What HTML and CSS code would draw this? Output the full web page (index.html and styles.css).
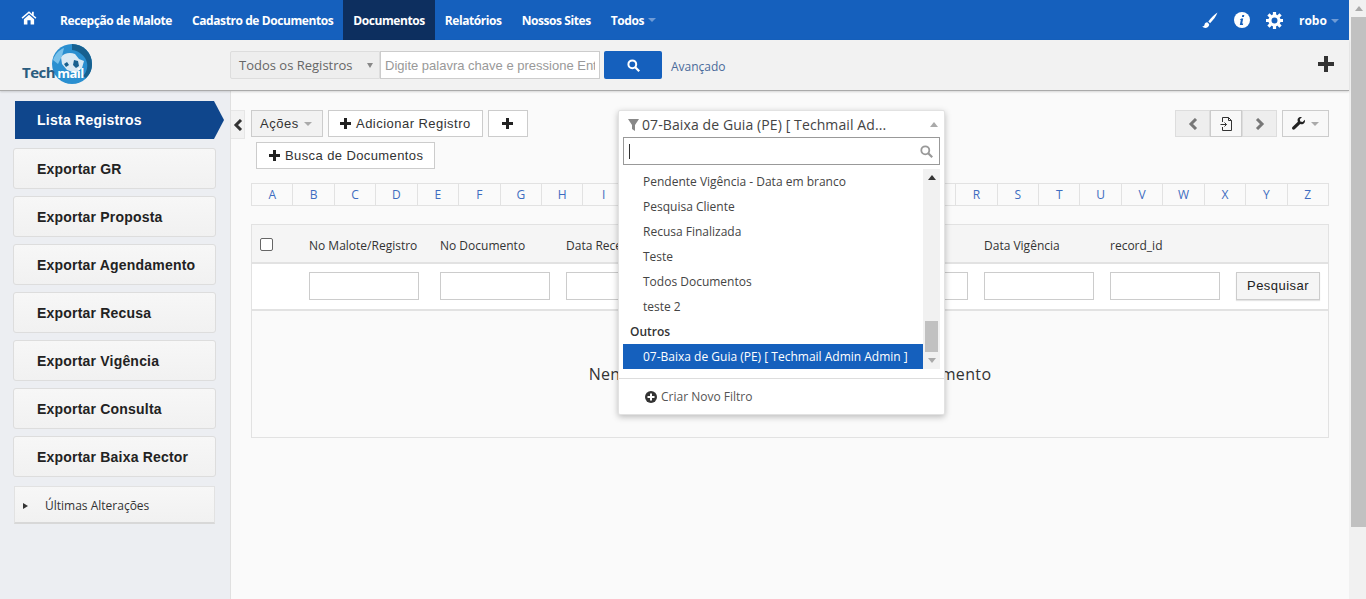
FILE: index.html
```html
<!DOCTYPE html>
<html lang="pt-BR">
<head>
    <meta charset="UTF-8">
    <meta name="viewport" content="width=device-width, initial-scale=1.0">
    <title>Documentos</title>
    <link rel="stylesheet" href="styles.css">
</head>
<body>
<div class="page">
    <header class="topbar">
        <a class="home-link">
            <svg width="16" height="15" viewBox="0 0 18 17"><path fill="#fff" d="M9 1.500.6 8.600l1.100 1.300L9 3.800l7.300 6.100 1.100-1.300-3-2.500V2h-2v2.400zM3.200 10.400v6.100h4v-5h3.600v5h4v-6.100L9 5.500z"/></svg>
        </a>
        <a class="nav-item">Recepção de Malote</a>
        <a class="nav-item">Cadastro de Documentos</a>
        <a class="nav-item active">Documentos</a>
        <a class="nav-item">Relatórios</a>
        <a class="nav-item">Nossos Sites</a>
        <a class="nav-item">Todos <span class="caret caret-nav"></span></a>
        <div class="nav-right">
            <svg width="17" height="17" viewBox="0 0 17 17"><path fill="#fff" d="M16.500.6C13.500 2.300 9.500 6.300 7.300 9.500l1.800 1.700C12 8.700 15.300 4 16.500.6zM6.300 10.300c-1.700.1-2.600 1.100-2.800 2.400-.1 1-.8 1.700-2.300 1.800 1.300 1.500 3.700 1.900 5.400.8 1.200-.8 1.800-2 1.500-3.200z"/></svg>
            <svg width="16" height="16" viewBox="0 0 16 16"><circle cx="8" cy="8" r="8" fill="#fff"/><path fill="#1560bd" d="M8.300 3h2l-.4 2h-2zM7.200 6.500h2l-1 5h1l-.3 1.500H5.800l1-5h-1z"/></svg>
            <svg width="17" height="17" viewBox="0 0 16 16"><circle cx="8" cy="8" r="4.300" fill="none" stroke="#fff" stroke-width="3"/><path stroke="#fff" stroke-width="3" d="M8 0v3M8 13v3M0 8h3M13 8h3M2.300 2.300l2.100 2.100M11.600 11.600l2.100 2.100M2.300 13.700l2.100-2.100M11.600 4.400l2.100-2.100"/></svg>
            <span class="user-name">robo <span class="caret caret-nav"></span></span>
        </div>
    </header>

    <div class="subheader">
        <div class="logo">
            <svg width="44" height="44" viewBox="0 0 44 44">
                <circle cx="22" cy="22" r="20" fill="#2a8fd0"/>
                <path fill="#17608f" d="M22 2a20 20 0 0 1 20 20c0 6-2 10-6 14l-3-2c3-3 5-8 4-13-1-6-7-12-15-13z"/>
                <path fill="#d9e9f3" d="M11 15c3-4 9-5 14-3l4 5 5 2-2 7-6 5-9-3-5-6z"/>
                <path fill="#17608f" d="M24 18l4 1 1 5-3 2-3-3zM14 22l3-2 2 3-3 2z"/>
                <path fill="#79c1ea" d="M3 18c2-6 6-10 11-12l-2 8-4 8z"/>
            </svg>
            <span class="logo-text"><span class="logo-tech">Tech</span><span class="logo-mail">mail</span></span>
        </div>
        <div class="search-select">Todos os Registros <span class="caret caret-gray"></span></div>
        <input class="search-input" type="text" placeholder="Digite palavra chave e pressione Enter">
        <button class="search-btn">
            <svg width="13" height="13" viewBox="0 0 13 13"><circle cx="5.300" cy="5.300" r="3.900" fill="none" stroke="#fff" stroke-width="2"/><path stroke="#fff" stroke-width="2.200" d="m8.200 8.200 4 4"/></svg>
        </button>
        <a class="advanced-link">Avançado</a>
        <svg class="add-big" width="18" height="18" viewBox="0 0 18 18"><path fill="#333" d="M7 1h4v6h6v4h-6v6H7v-6H1V7h6z"/></svg>
    </div>

    <div class="layout">
        <aside class="sidebar">
            <a class="side-active">Lista Registros</a>
            <a class="side-btn">Exportar GR</a>
            <a class="side-btn">Exportar Proposta</a>
            <a class="side-btn">Exportar Agendamento</a>
            <a class="side-btn">Exportar Recusa</a>
            <a class="side-btn">Exportar Vigência</a>
            <a class="side-btn">Exportar Consulta</a>
            <a class="side-btn">Exportar Baixa Rector</a>
            <div class="side-recent"><span class="tri-right"></span>Últimas Alterações</div>
        </aside>

        <main class="content">
            <div class="collapse-tab">
                <svg width="10" height="12" viewBox="0 0 10 12"><path fill="none" stroke="#333" stroke-width="3" d="M8 1 3 6l5 5"/></svg>
            </div>
            <div class="toolbar">
                <div class="tool-left">
                    <button class="btn btn-gray">Ações <span class="caret caret-gray"></span></button>
                    <button class="btn btn-add"><span class="plus"></span>Adicionar Registro</button>
                    <button class="btn btn-plus"><span class="plus"></span></button>
                    <button class="btn btn-search"><span class="plus"></span>Busca de Documentos</button>
                </div>
                <div class="tool-right">
                    <div class="pager">
                        <button class="pager-btn pager-off">
                            <svg width="10" height="12" viewBox="0 0 10 12"><path fill="none" stroke="#777" stroke-width="3" d="M8 1 3 6l5 5"/></svg>
                        </button>
                        <button class="pager-btn pager-mid">
                            <svg width="13" height="14" viewBox="0 0 13 14"><path fill="none" stroke="#333" d="M2.500 5V.5h6l3 3v10h-9V10M8.500.5v3h3M.5 7.500h6M4.500 5.500l2 2-2 2"/></svg>
                        </button>
                        <button class="pager-btn pager-off">
                            <svg width="10" height="12" viewBox="0 0 10 12"><path fill="none" stroke="#777" stroke-width="3" d="m2 1 5 5-5 5"/></svg>
                        </button>
                    </div>
                    <button class="btn btn-tools">
                        <svg width="13" height="13" viewBox="0 0 13 13"><path fill="#222" d="M12.800 2.800 10.600 5 8.300 4.500 7.800 2.200 10 0C8.300-.5 6.400.2 5.800 1.800c-.4 1-.3 2 .1 2.900L.5 10.100c-.6.600-.6 1.600 0 2.200s1.600.6 2.200 0l5.500-5.400c.9.400 1.900.4 2.800.1 1.600-.7 2.300-2.500 1.800-4.200z"/></svg>
                        <span class="caret caret-gray"></span>
                    </button>
                </div>
            </div>

            <div class="alphabet">
                <a>A</a><a>B</a><a>C</a><a>D</a><a>E</a><a>F</a><a>G</a><a>H</a><a>I</a><a>J</a><a>K</a><a>L</a><a>M</a>
                <a>N</a><a>O</a><a>P</a><a>Q</a><a>R</a><a>S</a><a>T</a><a>U</a><a>V</a><a>W</a><a>X</a><a>Y</a><a>Z</a>
            </div>

            <div class="grid-box">
                <div class="grid-row grid-head">
                    <span class="check"></span>
                    <span>No Malote/Registro</span>
                    <span>No Documento</span>
                    <span>Data Recebimento</span>
                    <span>Data Baixa</span>
                    <span>Situação</span>
                    <span>Data Vigência</span>
                    <span>record_id</span>
                    <span></span>
                </div>
                <div class="grid-row grid-filter">
                    <span></span>
                    <input type="text">
                    <input type="text">
                    <input type="text">
                    <input type="text">
                    <input type="text">
                    <input type="text">
                    <input type="text">
                    <button class="btn-find">Pesquisar</button>
                </div>
                <div class="grid-empty">Nenhum Registro encontrado para este Documento</div>
            </div>

            <div class="filter-drop">
                <div class="filter-head">
                    <svg class="funnel" width="11" height="12" viewBox="0 0 11 12"><path fill="#888" d="M0 0h11L7 6v6L4 10V6z"/></svg>
                    <span class="filter-title">07-Baixa de Guia (PE) [ Techmail Ad...</span>
                    <span class="caret caret-up"></span>
                </div>
                <div class="filter-search">
                    <span class="text-cursor"></span>
                    <svg width="13" height="13" viewBox="0 0 13 13"><circle cx="5.300" cy="5.300" r="4" fill="none" stroke="#999" stroke-width="1.800"/><path stroke="#999" stroke-width="2.200" d="m8.200 8.200 4 4"/></svg>
                </div>
                <div class="filter-list">
                    <ul class="filter-items">
                        <li>Pendente Vigência - Data em branco</li>
                        <li>Pesquisa Cliente</li>
                        <li>Recusa Finalizada</li>
                        <li>Teste</li>
                        <li>Todos Documentos</li>
                        <li>teste 2</li>
                        <li class="filter-group">Outros</li>
                        <li class="filter-selected">07-Baixa de Guia (PE) [ Techmail Admin Admin ]</li>
                    </ul>
                    <div class="filter-scroll">
                        <span class="caret caret-up-dark"></span>
                        <span class="filter-thumb"></span>
                        <span class="caret caret-down-light"></span>
                    </div>
                </div>
                <div class="filter-foot">
                    <svg width="12" height="12" viewBox="0 0 12 12"><circle cx="6" cy="6" r="6" fill="#333"/><path fill="#fff" d="M5 2.500h2V5h2.500v2H7v2.500H5V7H2.500V5H5z"/></svg>
                    Criar Novo Filtro
                </div>
            </div>
        </main>
    </div>
</div>

<div class="page-scroll">
    <span class="caret caret-up"></span>
    <span class="page-thumb"></span>
</div>
</body>
</html>
```

FILE: styles.css
```css
* {
    box-sizing: border-box;
}

html, body {
    height: 100%;
}

body {
    margin: 0;
    display: flex;
    overflow: hidden;
    font-family: "Open Sans", sans-serif;
    font-size: 12px;
    color: #333;
    background-color: #fafafa;
}

.page {
    width: 1349px;
    height: 599px;
    display: flex;
    flex-direction: column;
}

/* top navigation */
.topbar {
    height: 40px;
    flex: none;
    display: flex;
    align-items: stretch;
    background-color: #1560bd;
    color: #fff;
    font-size: 12px;
    font-weight: 700;
    letter-spacing: -0.42px;
}

.home-link {
    width: 50px;
    padding: 10px 0 0 21px;
}

.nav-item {
    padding: 0 10px;
    display: flex;
    align-items: center;
    gap: 4px;
}

.nav-item.active {
    background-color: #0d2f5f;
}

.nav-right {
    margin-left: auto;
    display: flex;
    align-items: center;
    gap: 16px;
    padding-right: 10px;
}

.user-name {
    letter-spacing: 0;
}

.caret {
    display: inline-block;
    width: 0;
    height: 0;
    border-left: 4px solid transparent;
    border-right: 4px solid transparent;
    border-top: 4px solid #aaa;
    vertical-align: middle;
}

.user-name .caret {
    margin-left: 1px;
}

.caret-nav {
    border-top-color: #6f9bd6;
}

.caret-gray {
    border-top-color: #aaa;
}

.caret-up {
    border-top: 0;
    border-bottom: 5px solid #aaa;
}

.caret-up-dark {
    border-top: 0;
    border-bottom: 5px solid #333;
}

.caret-down-light {
    border-top: 5px solid #aaa;
}

/* search bar */
.subheader {
    height: 51px;
    flex: none;
    display: flex;
    align-items: flex-start;
    padding-top: 11px;
    background-color: #f2f2f2;
    border-bottom: 1px solid #aaa;
    box-shadow: 0 1px 2px rgba(0, 0, 0, 0.15);
    position: relative;
    z-index: 2;
}

.logo {
    width: 230px;
    height: 40px;
    margin-top: -9px;
    padding-left: 50px;
    position: relative;
}

.logo svg {
    display: block;
}

.logo-text {
    position: absolute;
    left: 22px;
    top: 20px;
    font-size: 15px;
    font-weight: 700;
    letter-spacing: -0.5px;
}

.logo-tech {
    color: #2b5d7f;
}

.logo-mail {
    margin-left: 2px;
    font-size: 13px;
    color: #fff;
}

.search-select {
    width: 150px;
    height: 28px;
    padding: 0 6px 0 8px;
    display: flex;
    align-items: center;
    justify-content: space-between;
    background-color: #eee;
    border: 1px solid #ddd;
    border-radius: 2px 0 0 2px;
    font-size: 13px;
    color: #666;
}

.search-select .caret {
    border-left-width: 3px;
    border-right-width: 3px;
    border-top-width: 5px;
    border-top-color: #888;
}

.search-input {
    width: 220px;
    height: 28px;
    padding: 0 4px;
    border: 1px solid #ccc;
    background-color: #fff;
    font-family: "Liberation Sans", sans-serif;
    font-size: 13px;
}

.search-input::placeholder {
    color: #999;
}

.search-btn {
    width: 58px;
    height: 28px;
    margin-left: 4px;
    padding: 0;
    background-color: #1560bd;
    border: 0;
    border-radius: 2px;
}

.search-btn svg {
    display: block;
    margin: 0 auto;
}

.advanced-link {
    margin-left: 9px;
    line-height: 32px;
    color: #4a6a9a;
}

.add-big {
    position: absolute;
    right: 14px;
    top: 15px;
}

/* layout */
.layout {
    flex: 1;
    display: flex;
    min-height: 0;
}

.sidebar {
    width: 231px;
    flex: none;
    padding: 10px 14px 0 13px;
    background-color: #eceef2;
    border-right: 1px solid #e0e0e0;
    display: flex;
    flex-direction: column;
    align-items: flex-start;
}

.side-active {
    width: 209px;
    height: 38px;
    margin-left: 2px;
    margin-bottom: 9px;
    padding-left: 22px;
    display: flex;
    align-items: center;
    background-color: #0f468c;
    color: #fff;
    font-family: "Liberation Sans", sans-serif;
    font-size: 14px;
    font-weight: 700;
    letter-spacing: 0.25px;
    clip-path: polygon(0 0, 199px 0, 100% 50%, 199px 100%, 0 100%);
}

.side-btn {
    width: 203px;
    height: 41px;
    margin-bottom: 7px;
    padding-left: 23px;
    display: flex;
    align-items: center;
    background: linear-gradient(#f7f7f7, #f1f1f1);
    border: 1px solid #ddd;
    border-radius: 3px;
    color: #222;
    font-family: "Liberation Sans", sans-serif;
    font-size: 14px;
    font-weight: 700;
    letter-spacing: 0.2px;
}

.side-recent {
    width: 201px;
    height: 38px;
    margin: 2px 0 0 1px;
    padding-top: 2px;
    display: flex;
    align-items: center;
    background: linear-gradient(#f7f7f7, #f1f1f1);
    border: 1px solid #e2e2e2;
    border-bottom: 2px solid #d8d8d8;
    font-size: 12px;
    color: #333;
}

.tri-right {
    width: 0;
    height: 0;
    margin: 0 17px 0 8px;
    border-top: 3px solid transparent;
    border-bottom: 3px solid transparent;
    border-left: 5px solid #333;
}

/* content */
.content {
    flex: 1;
    position: relative;
    padding: 19px 20px 0 20px;
    background-color: #fafafa;
}

.collapse-tab {
    position: absolute;
    left: 0;
    top: 19px;
    width: 14px;
    height: 29px;
    display: flex;
    align-items: center;
    justify-content: center;
    background-color: #f2f2f2;
    border: 1px solid #e6e6e6;
    border-left: 0;
}

.toolbar {
    height: 60px;
    display: flex;
    justify-content: space-between;
}

.tool-left {
    width: 300px;
    display: flex;
    flex-wrap: wrap;
    align-items: flex-start;
    align-content: flex-start;
    gap: 5px;
}

.btn {
    height: 27px;
    padding: 0 11px;
    display: inline-flex;
    align-items: center;
    gap: 5px;
    flex: none;
    background-color: #fff;
    border: 1px solid #ccc;
    font-family: "Liberation Sans", sans-serif;
    font-size: 13px;
    letter-spacing: 0.4px;
    color: #333;
}

.btn-add {
    letter-spacing: 0.47px;
}

.btn-gray {
    width: 72px;
    padding: 0 8px;
    letter-spacing: 0.55px;
    background-color: #f2f2f2;
}

.btn-plus {
    width: 40px;
    justify-content: center;
    padding: 0;
}

.btn-search {
    margin: 0 0 0 5px;
    padding: 0 11px 0 12px;
}

.plus {
    width: 11px;
    height: 11px;
    flex: none;
    background:
        linear-gradient(#222, #222) center / 11px 3px no-repeat,
        linear-gradient(#222, #222) center / 3px 11px no-repeat;
}

.tool-right {
    display: flex;
    align-items: flex-start;
    gap: 5px;
}

.pager {
    display: flex;
}

.pager-btn {
    height: 27px;
    width: 35px;
    padding: 0;
    display: flex;
    align-items: center;
    justify-content: center;
    background-color: #eee;
    border: 1px solid #ddd;
}

.pager-mid {
    width: 32px;
    background-color: #f8f8f8;
    border-color: #ccc;
}

.btn-tools {
    width: 47px;
    padding: 0 9px;
    justify-content: space-between;
    background-color: #f8f8f8;
}

/* letters */
.alphabet {
    margin-top: 13px;
    height: 23px;
    display: grid;
    grid-template-columns: repeat(26, 1fr);
    border: 1px solid #e2e2e2;
    border-left: 0;
}

.alphabet a {
    display: flex;
    align-items: center;
    justify-content: center;
    border-left: 1px solid #e2e2e2;
    color: #3d6cc0;
    font-size: 12px;
}

/* records */
.grid-box {
    margin-top: 18px;
    height: 214px;
    border: 1px solid #e2e2e2;
    background-color: #fafafa;
}

.grid-row {
    display: grid;
    grid-template-columns: 57px 131px 126px 146px 146px 126px 126px 126px 1fr;
    align-items: center;
}

.grid-head {
    height: 39px;
    padding-top: 4px;
    background-color: #f5f5f5;
    border-bottom: 2px solid #e2e2e2;
    color: #333;
}

.check {
    width: 13px;
    height: 13px;
    margin: -3px 0 0 8px;
    background-color: #fff;
    border: 1px solid #666;
    border-radius: 2px;
}

.grid-filter {
    height: 47px;
    padding-bottom: 2px;
    background-color: #fff;
    border-bottom: 2px solid #e2e2e2;
}

.grid-filter input {
    width: 110px;
    height: 28px;
    border: 1px solid #ccc;
    background-color: #fff;
}

.btn-find {
    width: 84px;
    height: 28px;
    padding: 0;
    background-color: #f5f5f5;
    border: 1px solid #ccc;
    box-shadow: 0 1px 1px rgba(0, 0, 0, 0.1);
    font-family: "Liberation Sans", sans-serif;
    font-size: 13px;
    letter-spacing: 0.45px;
    color: #222;
}

.grid-empty {
    padding-top: 52px;
    text-align: center;
    font-size: 16px;
    line-height: 22px;
    letter-spacing: 0.35px;
}

/* filter dropdown */
.filter-drop {
    position: absolute;
    left: 387px;
    top: 19px;
    width: 327px;
    height: 305px;
    padding: 0 4px;
    background-color: #fff;
    border: 1px solid #e2e2e2;
    border-radius: 2px;
    box-shadow: 0 2px 6px rgba(0, 0, 0, 0.25);
    z-index: 3;
}

.filter-head {
    height: 26px;
    padding: 0 2px 0 5px;
    display: flex;
    align-items: center;
    gap: 3px;
    font-size: 14px;
    letter-spacing: 0.1px;
    color: #444;
}

.funnel {
    margin-top: 2px;
}

.filter-title {
    flex: 1;
    white-space: nowrap;
}

.filter-search {
    height: 28px;
    padding: 0 6px 0 5px;
    display: flex;
    align-items: center;
    justify-content: space-between;
    border: 1px solid #999;
}

.text-cursor {
    width: 1px;
    height: 15px;
    background-color: #333;
}

.filter-list {
    height: 200px;
    margin-top: 4px;
    display: flex;
}

.filter-items {
    flex: 1;
    margin: 0;
    padding: 0;
    list-style: none;
}

.filter-items li {
    height: 25px;
    padding-left: 20px;
    line-height: 25px;
    color: #444;
}

.filter-items .filter-group {
    padding-left: 7px;
    font-weight: 600;
    color: #333;
}

.filter-items .filter-selected {
    background-color: #1560bd;
    color: #fff;
}

.filter-scroll {
    width: 17px;
    padding: 6px 0 5px;
    display: flex;
    flex-direction: column;
    align-items: center;
    background-color: #f1f1f1;
}

.filter-thumb {
    width: 13px;
    height: 31px;
    margin-top: 141px;
    background-color: #c1c1c1;
}

.filter-scroll .caret-down-light {
    margin-top: 6px;
}

.filter-foot {
    height: 36px;
    margin: 9px -4px 0;
    padding-left: 26px;
    display: flex;
    align-items: center;
    gap: 4px;
    border-top: 1px solid #ddd;
    color: #555;
}

/* window scrollbar */
.page-scroll {
    width: 17px;
    height: 599px;
    flex: none;
    padding-top: 6px;
    padding-left: 2px;
    display: flex;
    flex-direction: column;
    align-items: center;
    background-color: #f1f1f1;
}

.page-thumb {
    width: 15px;
    height: 510px;
    margin-top: 6px;
    background-color: #c1c1c1;
}
```
